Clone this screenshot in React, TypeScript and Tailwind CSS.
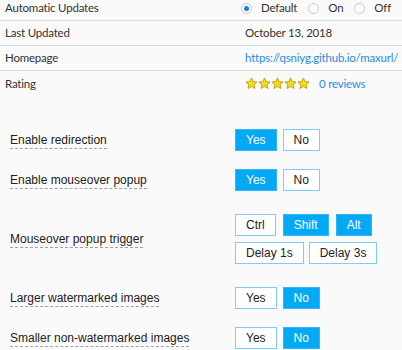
import React from "react";

const topFont = { fontFamily: 'Lato, "Noto Sans", sans-serif' };

function Radio({ label, checked }: { label: string; checked?: boolean }) {
  return (
    <label className="flex items-center">
      <span className="flex h-[11px] w-[11px] items-center justify-center rounded-full border border-[#c8c8c8] bg-white">
        {checked && <span className="h-[5px] w-[5px] rounded-full bg-[#1a7fd4]" />}
      </span>
      <span className="ml-[9px]">{label}</span>
    </label>
  );
}

function Star() {
  return (
    <svg viewBox="0 0 24 24" className="h-[13px] w-[13px]">
      <path
        d="M12 1.8l3.1 6.6 7.1.8-5.3 4.9 1.5 7.1L12 17.6l-6.4 3.6 1.5-7.1-5.3-4.9 7.1-.8z"
        fill="#f6dc14"
        stroke="#b59a1a"
        strokeWidth="1.6"
        strokeLinejoin="round"
      />
    </svg>
  );
}

function InfoRow({ label, children, last }: { label: string; children: React.ReactNode; last?: boolean }) {
  return (
    <div className={`grid h-[25px] grid-cols-[245px_1fr] items-center ${last ? "" : "border-b border-[#dcdcdc]"}`}>
      <div className="pl-[5px]">{label}</div>
      <div className="whitespace-nowrap">{children}</div>
    </div>
  );
}

function Btn({ label, active }: { label: string; active?: boolean }) {
  return (
    <button
      className={`flex h-[22px] items-center justify-center border px-[10px] text-[12px] ${
        active ? "border-[#33b5f7] bg-[#03a9f4] text-white" : "border-[#7ccdf7] bg-white text-[#222]"
      }`}
    >
      {label}
    </button>
  );
}

function OptionRow({ label, children, tall }: { label: string; children: React.ReactNode; tall?: boolean }) {
  return (
    <div className={`flex items-center ${tall ? "h-[78px]" : "h-10"}`}>
      <div className="w-[235px] pl-[10px]">
        <span className="border-b border-dashed border-[#a0a0a0] pb-[1px]">{label}</span>
      </div>
      <div>{children}</div>
    </div>
  );
}

export default function App() {
  return (
    <div className="h-[350px] w-[402px] overflow-hidden bg-[#fafafa]">
      <div className="-mt-1 text-[11.5px] tracking-[-0.2px] text-[#333]" style={topFont}>
        <InfoRow label="Automatic Updates">
          <div className="-ml-1 flex items-center gap-[11px]">
            <Radio label="Default" checked />
            <Radio label="On" />
            <Radio label="Off" />
          </div>
        </InfoRow>
        <InfoRow label="Last Updated">October 13, 2018</InfoRow>
        <InfoRow label="Homepage">
          <a className="text-[#2a8be0]">https://qsniyg.github.io/maxurl/</a>
        </InfoRow>
        <InfoRow label="Rating" last>
          <div className="flex items-center">
            <div className="flex">
              <Star />
              <Star />
              <Star />
              <Star />
              <Star />
            </div>
            <span className="ml-[9px] text-[#2a8be0]">0 reviews</span>
          </div>
        </InfoRow>
      </div>
      <div className="mt-[24px] text-[12px] text-[#222]" style={{ fontFamily: '"Liberation Sans", Arial, sans-serif' }}>
        <OptionRow label="Enable redirection">
          <div className="flex gap-[6px]">
            <Btn label="Yes" active />
            <Btn label="No" />
          </div>
        </OptionRow>
        <OptionRow label="Enable mouseover popup">
          <div className="flex gap-[6px]">
            <Btn label="Yes" active />
            <Btn label="No" />
          </div>
        </OptionRow>
        <OptionRow label="Mouseover popup trigger" tall>
          <div className="flex flex-col gap-[6px]">
            <div className="flex gap-[7px]">
              <Btn label="Ctrl" />
              <Btn label="Shift" active />
              <Btn label="Alt" active />
            </div>
            <div className="flex gap-[5px]">
              <Btn label="Delay 1s" />
              <Btn label="Delay 3s" />
            </div>
          </div>
        </OptionRow>
        <OptionRow label="Larger watermarked images">
          <div className="flex gap-[6px]">
            <Btn label="Yes" />
            <Btn label="No" active />
          </div>
        </OptionRow>
        <OptionRow label="Smaller non-watermarked images">
          <div className="flex gap-[6px]">
            <Btn label="Yes" />
            <Btn label="No" active />
          </div>
        </OptionRow>
      </div>
    </div>
  );
}
